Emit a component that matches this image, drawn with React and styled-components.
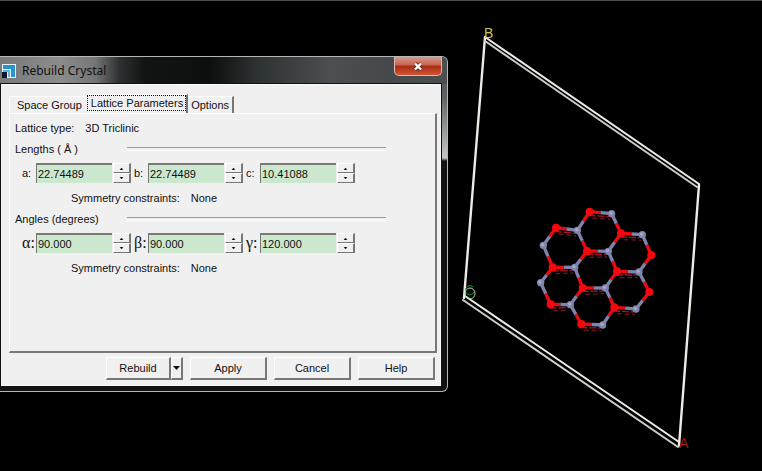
import { useState } from "react";
import styled, { createGlobalStyle, css } from "styled-components";

const GlobalStyle = createGlobalStyle`
  * {
    box-sizing: border-box;
  }

  body {
    margin: 0;
    background: #000;
    color: #111;
    font-family: "Liberation Sans", Arial, sans-serif;
    font-size: 11px;
    line-height: 16px;
  }

  button,
  input {
    color: inherit;
    font: inherit;
  }
`;

const Desktop = styled.main`
  display: flex;
  align-items: flex-start;
  min-height: 100vh;
  background: #000;
  border-top: 1px solid #4c4c4c;
`;

const Dialog = styled.section`
  flex: 0 0 448px;
  margin-top: 55px;
  padding: 0 6px 5px 1px;
  border: 1px solid #b4b6b8;
  border-left: 0;
  border-radius: 0 6px 6px 0;
  background: linear-gradient(
    #4c4f50 0,
    #606364 40px,
    #c4c6c8 101px,
    #101214 104px,
    #101214 100%
  );
  overflow: hidden;
`;

const TitleBar = styled.header`
  display: flex;
  align-items: center;
  height: 27px;
  margin: 0 -6px 0 -1px;
  padding: 0 5px 0 2px;
  background: linear-gradient(
    90deg,
    #77797a 0,
    #8b8c8d 60px,
    #747677 95px,
    #2c2f2f 120px,
    #101413 145px,
    #0b0f0e 210px,
    #2b3030 255px,
    #4b4f51 330px,
    #46494b 390px,
    #4c4f50 100%
  );
`;

const Title = styled.h1`
  flex: 1;
  margin: 0 0 0 6px;
  font: 12px/16px "Noto Sans", sans-serif;
`;

const CloseButton = styled.button`
  display: grid;
  place-items: center;
  align-self: flex-start;
  width: 48px;
  height: 19px;
  padding: 0;
  border: 1px solid #e0b8b0;
  border-top: 0;
  border-radius: 0 0 5px 5px;
  background: linear-gradient(#d99a8c 0, #c66350 45%, #a92a16 50%, #cf5535 100%);
`;

const Client = styled.div`
  padding: 9px 3px 5px 8px;
  border: 1px solid #fafafa;
  border-width: 1px 1px 1px 0;
  outline: 1px solid #111;
  background: #f0f0f0;
`;

const TabList = styled.div`
  display: flex;
  align-items: flex-end;
  height: 19px;
`;

const Tab = styled.button`
  height: 17px;
  padding: 0 3px;
  border: 0;
  border-top: 1px solid #fff;
  border-right: 2px solid #777;
  background: #f0f0f0;
  white-space: nowrap;

  &:first-child {
    padding: 0 5px 0 7px;
    border-left: 1px solid #fff;
    border-right: 0;
  }

  ${(props) =>
    props.$active &&
    css`
      height: 19px;
      padding: 0 0 2px;
    `}
`;

const FocusMark = styled.span`
  display: block;
  height: 16px;
  padding: 0 2px 0 3px;
  border: 1px dotted #111;
  line-height: 14px;
`;

const Pane = styled.div`
  padding: 6px 49px 75px 5px;
  border: 1px solid #fff;
  border-right: 2px solid #777;
  border-bottom: 2px solid #777;
`;

const TypeRow = styled.div`
  display: flex;
  gap: 11px;
`;

const Group = styled.fieldset`
  min-width: 0;
  margin: 5px 0 0;
  padding: 0;
  border: 0;
`;

const Heading = styled.div`
  display: grid;
  grid-template-columns: 112px 1fr;
  align-items: center;

  &::after {
    content: "";
    height: 2px;
    border-top: 1px solid #999;
    border-bottom: 1px solid #fff;
  }
`;

const Fields = styled.div`
  display: flex;
  gap: 1px;
  padding: 6px 0 7px 5px;
`;

const Field = styled.div`
  display: grid;
  grid-template-columns: 15px 76px 18px;
  column-gap: 1px;
  align-items: center;
  height: 20px;
`;

const FieldLabel = styled.label`
  padding-left: 2px;
  white-space: nowrap;

  ${(props) =>
    props.$greek &&
    css`
      font: 16px/16px "Liberation Serif", serif;
    `}
`;

const ValueInput = styled.input`
  width: 100%;
  height: 20px;
  padding: 0 1px;
  border: 0;
  border-top: 2px solid #7a7a72;
  border-left: 1px solid #777;
  border-radius: 0;
  background: #cbe8cf;
`;

const Spinner = styled.div`
  display: grid;
  grid-template-rows: 10px 10px;
`;

const SpinButton = styled.button`
  display: grid;
  place-items: center;
  padding: 0;
  border: 1px solid #fff;
  border-right: 2px solid #777;
  border-bottom: 1px solid #777;
  background: #f0f0f0;
`;

const Constraint = styled.div`
  display: flex;
  gap: 11px;
  padding-left: 56px;
`;

const Footer = styled.footer`
  display: flex;
  justify-content: flex-end;
  gap: 7px;
  padding: 4px 2px 0 0;
`;

const PushButton = styled.button`
  display: grid;
  place-items: center;
  width: ${(props) => props.$width || 77}px;
  height: 23px;
  padding: 0;
  border: 1px solid #fff;
  border-right: 2px solid #777;
  border-bottom: 2px solid #777;
  background: #f0f0f0;
`;

const SplitButton = styled.div`
  display: flex;
`;

const Viewer = styled.svg`
  flex: 1;
  min-width: 0;
  height: calc(100vh - 1px);
`;

const LENGTHS = [
  { label: "a:", value: "22.74489" },
  { label: "b:", value: "22.74489" },
  { label: "c:", value: "10.41088" },
];

const ANGLES = [
  { label: "α:", value: "90.000" },
  { label: "β:", value: "90.000" },
  { label: "γ:", value: "120.000" },
];

// Atom centres, in thirds of a pixel
const RED = [
  [209, 35], [108, 83], [303, 100], [201, 153], [394, 165], [98, 202],
  [291, 214], [188, 264], [388, 276], [92, 313], [283, 322], [184, 372],
];
const GREY = [
  [275, 41], [172, 91], [367, 104], [265, 154], [70, 136], [164, 202],
  [357, 216], [62, 248], [256, 264], [151, 314], [348, 327], [248, 375],
];

const BONDS = RED.flatMap((r) =>
  GREY.filter((g) => Math.hypot(r[0] - g[0], r[1] - g[1]) < 85).map((g) => ({
    r,
    g,
    mid: [(r[0] + g[0]) / 2, (r[1] + g[1]) / 2],
    flat: Math.abs(r[1] - g[1]) < 20,
  }))
);

const SpinArrow = ({ down }) => (
  <svg width="5" height="3" viewBox="0 0 5 3">
    <path d={down ? "M1 0h3L2.5 2z" : "M1 3h3L2.5 1z"} fill="#111" stroke="#111" strokeWidth="0.5" />
  </svg>
);

const NumberField = ({ label, value, step, digits, greek }) => {
  const [text, setText] = useState(value);
  const id = `field-${label[0]}`;
  const change = (by) => setText((Number(text) + by).toFixed(digits));

  return (
    <Field>
      <FieldLabel htmlFor={id} $greek={greek}>
        {label}
      </FieldLabel>
      <ValueInput id={id} value={text} onChange={(e) => setText(e.target.value)} />
      <Spinner>
        <SpinButton aria-label={`Increase ${label[0]}`} onClick={() => change(step)}>
          <SpinArrow />
        </SpinButton>
        <SpinButton aria-label={`Decrease ${label[0]}`} onClick={() => change(-step)}>
          <SpinArrow down />
        </SpinButton>
      </Spinner>
    </Field>
  );
};

const ParameterGroup = ({ title, fields, ...rest }) => (
  <Group aria-label={title}>
    <Heading>{title}</Heading>
    <Fields>
      {fields.map((field) => (
        <NumberField key={field.label} {...field} {...rest} />
      ))}
    </Fields>
    <Constraint>
      <span>Symmetry constraints:</span>
      <span>None</span>
    </Constraint>
  </Group>
);

const AppIcon = () => (
  <svg width="14" height="14" viewBox="0 0 14 14">
    <rect width="14" height="14" fill="#e8f4fa" />
    <path d="M1 1h12v12H9V5H1z" fill="#2593d0" />
    <path d="M1 6h7v7H6V8H1z" fill="#5fb4de" />
    <rect x="0" y="8" width="5" height="6" fill="#10142c" />
  </svg>
);

const CrystalView = () => (
  <Viewer viewBox="448 1 314 470" role="img" aria-label="Crystal cell">
    <g fill="none" stroke="#ecece6" strokeWidth="2" strokeLinecap="round">
      <path d="M485 37L464 298M699 185L679 446" strokeWidth="2.4" />
      <path d="M485 37L699 184M465 296L679 442" />
      <path d="M485 41L697 187M463 300L678 447" stroke="#cdcdc9" />
    </g>
    <g fontFamily="Liberation Sans, sans-serif" fontSize="14">
      <text x="484" y="38" fill="#c3c45c">B</text>
      <text x="679" y="448" fill="#a81616">A</text>
    </g>
    <g fill="none" strokeWidth="1">
      <path d="M473 287A4.500 4.500 0 1 0 474 292" stroke="#1f9b3e" />
      <ellipse cx="470" cy="293.500" rx="5" ry="5.500" stroke="#b9dba0" />
    </g>
    <g transform="translate(520 200) scale(0.3333)">
      {BONDS.filter((b) => b.flat).map(({ r, g }, i) => (
        <g key={i} fill="none" strokeWidth="4">
          <path
            d={`M${r[0] - 4} ${r[1] + 11}L${g[0] - 8} ${g[1] + 9}`}
            stroke="#b01420"
            strokeDasharray="22 5"
          />
          <path
            d={`M${r[0] + 8} ${r[1] + 19}L${g[0] - 4} ${g[1] + 17}`}
            stroke="#6d1626"
            strokeDasharray="14 9"
          />
        </g>
      ))}
      {BONDS.map(({ r, g, mid }, i) => (
        <g key={i} strokeWidth="10">
          <path d={`M${r}L${mid}`} stroke="#e80b10" />
          <path d={`M${g}L${mid}`} stroke="#7f83ad" />
        </g>
      ))}
      {RED.map(([x, y]) => (
        <circle key={`${x}-${y}`} cx={x} cy={y} r="12" fill="#f5070c" />
      ))}
      {GREY.map(([x, y]) => (
        <g key={`${x}-${y}`}>
          <circle cx={x} cy={y} r="11" fill="#8085ae" />
          <circle cx={x - 2} cy={y - 2} r="5" fill="#a4a9cc" />
        </g>
      ))}
    </g>
  </Viewer>
);

const App = () => (
  <>
    <GlobalStyle />
    <Desktop>
      <Dialog role="dialog" aria-labelledby="dialog-title">
        <TitleBar>
          <AppIcon />
          <Title id="dialog-title">Rebuild Crystal</Title>
          <CloseButton aria-label="Close">
            <svg width="10" height="9" viewBox="0 0 10 9" fill="none">
              <path d="M2 1.500L8 7.500M8 1.500L2 7.500" stroke="#58302c" strokeWidth="4" />
              <path d="M2 1.500L8 7.500M8 1.500L2 7.500" stroke="#fff" strokeWidth="2.400" />
            </svg>
          </CloseButton>
        </TitleBar>
        <Client>
          <TabList role="tablist">
            <Tab role="tab">Space Group</Tab>
            <Tab role="tab" aria-selected="true" $active>
              <FocusMark>Lattice Parameters</FocusMark>
            </Tab>
            <Tab role="tab">Options</Tab>
          </TabList>
          <Pane role="tabpanel">
            <TypeRow>
              <span>Lattice type:</span>
              <span>3D Triclinic</span>
            </TypeRow>
            <ParameterGroup title="Lengths ( Å )" fields={LENGTHS} step={0.1} digits={5} />
            <ParameterGroup title="Angles (degrees)" fields={ANGLES} step={1} digits={3} greek />
          </Pane>
          <Footer>
            <SplitButton>
              <PushButton $width={65}>Rebuild</PushButton>
              <PushButton $width={12} aria-label="Rebuild options">
                <svg width="7" height="4" viewBox="0 0 7 4">
                  <path d="M0 0h7L3.500 4z" fill="#111" />
                </svg>
              </PushButton>
            </SplitButton>
            <PushButton>Apply</PushButton>
            <PushButton>Cancel</PushButton>
            <PushButton>Help</PushButton>
          </Footer>
        </Client>
      </Dialog>
      <CrystalView />
    </Desktop>
  </>
);

export default App;
